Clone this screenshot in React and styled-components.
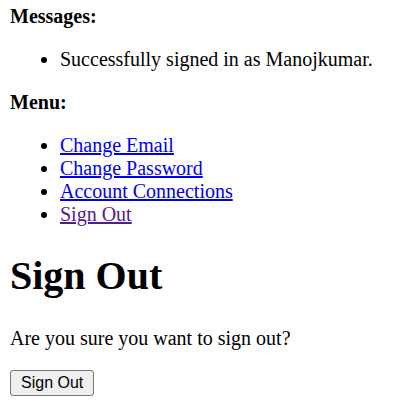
import React from "react";
import styled, { createGlobalStyle } from "styled-components";

const GlobalStyle = createGlobalStyle`
  html, body { background: #ffffff; }
  body {
    margin: 5px 10px 10px;
    font-family: "Liberation Serif", "Times New Roman", serif;
    font-size: 20px;
    line-height: 23px;
    color: #000000;
  }
`;

const Section = styled.div``;

const Label = styled.strong`
  font-weight: bold;
`;

const List = styled.ul`
  margin: 20px 0;
  padding-left: 50px;
  list-style: disc;
`;

const Item = styled.li``;

const MenuLink = styled.a`
  color: ${(p) => (p.$visited ? "#551A8B" : "#0000EE")};
  text-decoration: underline;
  cursor: pointer;
`;

const Title = styled.h1`
  font-size: 40px;
  line-height: 46px;
  font-weight: bold;
  margin: 26.8px 0 28px;
`;

const Text = styled.p`
  margin: 20px 0;
`;

const Form = styled.form`
  margin: 0;
`;

const Button = styled.button`
  font-family: "Liberation Sans", Arial, sans-serif;
  font-size: 16px;
  line-height: 18px;
  height: 26px;
  padding: 0 10px;
  color: #000000;
  background: #efefef;
  border: 1px solid #767676;
  border-radius: 3px;
`;

const menu = [
  { label: "Change Email" },
  { label: "Change Password" },
  { label: "Account Connections" },
  { label: "Sign Out", visited: true },
];

export default function App() {
  return (
    <>
      <GlobalStyle />
      <Section>
        <Label>Messages:</Label>
        <List>
          <Item>Successfully signed in as Manojkumar.</Item>
        </List>
      </Section>
      <Section>
        <Label>Menu:</Label>
        <List>
          {menu.map((m) => (
            <Item key={m.label}>
              <MenuLink href="#" $visited={m.visited}>
                {m.label}
              </MenuLink>
            </Item>
          ))}
        </List>
      </Section>
      <Title>Sign Out</Title>
      <Text>Are you sure you want to sign out?</Text>
      <Form onSubmit={(e) => e.preventDefault()}>
        <Button type="submit">Sign Out</Button>
      </Form>
    </>
  );
}
